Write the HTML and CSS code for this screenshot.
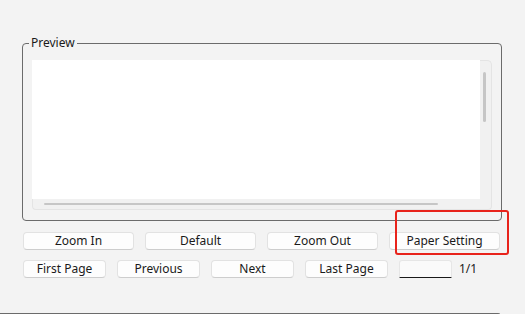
FILE: index.html
```html
<!DOCTYPE html>
<html>
<head>
<meta charset="utf-8">
<link rel="stylesheet" href="styles.css">
</head>
<body>
<div class="page">
  <fieldset class="group">
    <legend class="group-title">Preview</legend>
    <div class="scroll">
      <div class="viewport"></div>
      <div class="vbar"><div class="vthumb"></div></div>
      <div class="hbar"><div class="hthumb"></div></div>
      <div class="corner"></div>
    </div>
  </fieldset>
  <div class="row row-zoom">
    <button class="btn btn-wide">Zoom In</button>
    <button class="btn btn-wide">Default</button>
    <button class="btn btn-wide">Zoom Out</button>
    <button class="btn btn-wide">Paper Setting</button>
  </div>
  <div class="row row-nav">
    <button class="btn btn-nav">First Page</button>
    <button class="btn btn-nav">Previous</button>
    <button class="btn btn-nav">Next</button>
    <button class="btn btn-nav">Last Page</button>
    <input class="page-input" type="text" value="">
    <span class="page-count">1/1</span>
  </div>
  <div class="next-group"></div>
  <div class="highlight"></div>
</div>
</body>
</html>
```

FILE: styles.css
```css
html, body {
  margin: 0;
  padding: 0;
  background: #f3f3f3;
  width: 525px;
  height: 314px;
  overflow: hidden;
}

.page {
  position: relative;
  font-family: "Noto Sans", "Liberation Sans", sans-serif;
  font-size: 12px;
  color: #1a1a1a;
  padding-top: 35px;
}

.group {
  margin: 0 0 0 22px;
  width: 480px;
  box-sizing: border-box;
  border: 1px solid #6b6b6b;
  border-radius: 4px;
  padding: 9px 9px 10px 6px;
  min-inline-size: 0;
}

.group-title {
  padding: 0 2px;
  margin: 0;
  line-height: 16px;
  font-size: 12px;
  color: #1a1a1a;
}

.scroll {
  margin-left: 3px;
  height: 150px;
  display: grid;
  grid-template-columns: 1fr 12px;
  grid-template-rows: 1fr 11px;
}

.viewport {
  background: #ffffff;
}

.vbar {
  background: #f1f1f1;
  border: 1px solid #e4e4e4;
  border-bottom: none;
  border-left: none;
  border-top-right-radius: 5px;
  display: flex;
  justify-content: center;
  padding-top: 11px;
}

.vthumb {
  width: 3px;
  height: 50px;
  border-radius: 2px;
  background: #c6c6c6;
  margin-left: -2px;
}

.hbar {
  background: #f1f1f1;
  border: 1px solid #e4e4e4;
  border-top: none;
  border-right: none;
  border-bottom-left-radius: 4px;
  padding: 4px 0 0 11px;
}

.hthumb {
  width: 394px;
  height: 2px;
  border-radius: 1px;
  background: #c6c6c6;
}

.corner {
  background: #f1f1f1;
  border-right: 1px solid #e4e4e4;
  border-bottom: 1px solid #e4e4e4;
  border-bottom-right-radius: 4px;
}

.row {
  display: flex;
  align-items: center;
  margin-left: 23px;
}

.row-zoom {
  margin-top: 11px;
  gap: 11px;
}

.row-nav {
  margin-top: 10px;
  gap: 11px;
}

.btn {
  height: 18px;
  box-sizing: border-box;
  padding: 0;
  margin: 0;
  font-family: "Noto Sans", "Liberation Sans", sans-serif;
  font-size: 12px;
  line-height: 16px;
  color: #1a1a1a;
  background: #fdfdfd;
  border: 1px solid #e2e2e2;
  border-bottom-color: #cdcdcd;
  border-radius: 4px;
}

.btn-wide {
  width: 111px;
}

.btn-nav {
  width: 83px;
}

.page-input {
  width: 53px;
  height: 18px;
  box-sizing: border-box;
  margin: 0;
  padding: 0 4px;
  background: #fafafa;
  border: 1px solid #e6e6e6;
  border-bottom: 1px solid #1a1a1a;
  border-radius: 3px 3px 0 0;
  font-family: "Noto Sans", "Liberation Sans", sans-serif;
  font-size: 12px;
  outline: none;
}

.page-count {
  margin-left: -4px;
  line-height: 18px;
}

.next-group {
  margin-top: 35px;
  margin-left: -10px;
  width: 510px;
  height: 2px;
  box-sizing: border-box;
  border-top: 1px solid #6b6b6b;
  border-right: 1px solid #6b6b6b;
  border-top-right-radius: 4px;
}

.highlight {
  position: absolute;
  left: 395px;
  top: 210px;
  width: 114px;
  height: 45px;
  box-sizing: border-box;
  border: 2px solid #e8231b;
  border-radius: 3px;
}
```
